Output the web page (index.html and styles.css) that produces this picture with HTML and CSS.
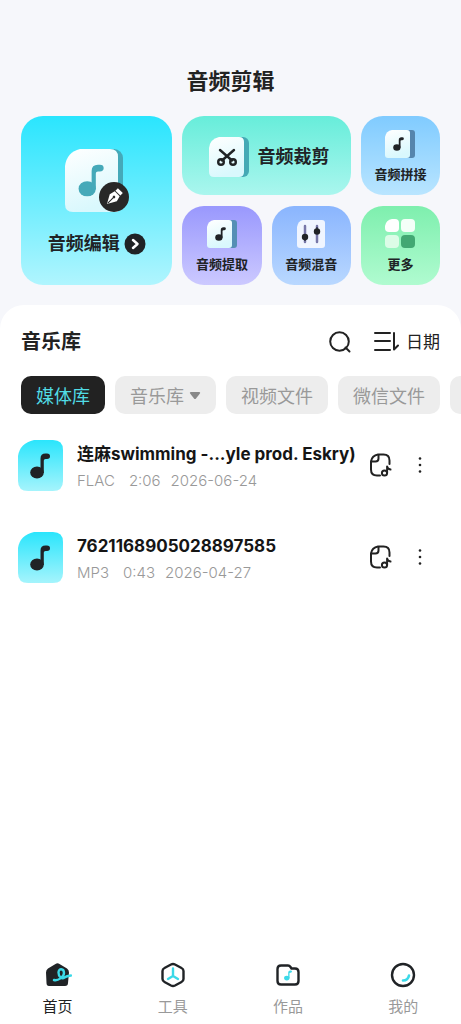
FILE: index.html
```html
<!DOCTYPE html>
<html lang="zh-CN">
<head>
<meta charset="utf-8">
<meta name="viewport" content="width=device-width, initial-scale=1">
<title>音频剪辑</title>
<link rel="stylesheet" href="styles.css">
</head>
<body>
<svg class="defs" width="0" height="0" aria-hidden="true">
  <defs>
    <linearGradient id="paper" x1="0" y1="0" x2="0.3" y2="1">
      <stop offset="0" stop-color="#fff"/><stop offset="1" stop-color="#d9f8fd"/>
    </linearGradient>
    <linearGradient id="cyan" x1="0" y1="0" x2="0" y2="1">
      <stop offset="0" stop-color="#2ae5fc"/><stop offset="1" stop-color="#a5f4fc"/>
    </linearGradient>
    <symbol id="note" viewBox="0 0 20 26">
      <ellipse cx="7" cy="19.500" rx="6.800" ry="6"/>
      <path d="M10.500 20V5.500Q10.500 0.500 15.500 0.500H17Q20 0.500 20 3.200T17 6H15.500Q13.800 6 13.800 7.500V20Z"/>
    </symbol>
    <symbol id="file-note" viewBox="0 0 24 26">
      <g fill="none" stroke="#222" stroke-width="2" stroke-linecap="round" stroke-linejoin="round">
        <path d="M11 23.500H8Q2 23.500 2 17.500V9.500Q3 3.500 9 2.500H14.500Q20.500 2.500 20.500 8.500V12"/>
        <path d="M2.500 9.500H6.500Q9.500 9.500 9.500 6.500V3"/>
        <circle cx="15.500" cy="21" r="2.600"/>
        <path d="M18.100 21V14.500Q18.500 17 21.500 17.500"/>
      </g>
    </symbol>
    <symbol id="dots" viewBox="0 0 4 18">
      <g fill="#222"><circle cx="2" cy="2.500" r="1.300"/><circle cx="2" cy="9" r="1.300"/><circle cx="2" cy="15.500" r="1.300"/></g>
    </symbol>
    <symbol id="track" viewBox="0 0 45 51">
      <path fill="url(#cyan)" d="M16 0H35Q45 0 45 10V41Q45 51 35 51H10Q0 51 0 41V16Q2 3 16 0Z"/>
      <use href="#note" x="12" y="13" width="20" height="26" fill="#202326"/>
    </symbol>
  </defs>
</svg>
<div class="app">
  <header class="header"><h1 class="title">音频剪辑</h1></header>

  <section class="tools" aria-label="音频工具">
    <button class="tool tool-edit">
      <svg width="66" height="66" viewBox="0 0 66 66" aria-hidden="true">
        <rect x="30" y="1" width="29" height="63" rx="9" fill="#45a9b9"/>
        <path fill="url(#paper)" d="M16 1H46Q54 1 54 9V64H9Q1 64 1 56V18Q3 4 16 1Z"/>
        <use href="#note" x="14" y="16" width="26" height="33" fill="#45a9b9"/>
        <circle cx="50" cy="49" r="15" fill="#282828"/>
        <g transform="translate(50 49) rotate(45)">
          <path fill="#fff" d="M-3.500 -9H3.500V-5.500H-3.500ZM-3.500 -4.500H3.500L5 1L0 10L-5 1Z"/>
          <path stroke="#282828" d="M0 1V9"/><circle r="1.300" fill="#282828"/>
        </g>
      </svg>
      <span class="tool-line">音频编辑
        <svg width="22" height="22" viewBox="0 0 22 22" aria-hidden="true"><circle cx="11" cy="11" r="10.500" fill="#202326"/><path d="M9 7L13.500 11L9 15" fill="none" stroke="#fff" stroke-width="2.500" stroke-linecap="round" stroke-linejoin="round"/></svg>
      </span>
    </button>
    <button class="tool tool-cut">
      <svg width="42" height="42" viewBox="0 0 42 42" aria-hidden="true">
        <rect x="20" y="1" width="21" height="40" rx="6" fill="#45a9b5"/>
        <path fill="url(#paper)" d="M11 1H31Q36 1 36 6V36Q36 41 31 41H6Q1 41 1 36V12Q2 3 11 1Z"/>
        <g fill="none" stroke="#202326" stroke-width="2.400" stroke-linecap="round"><path d="M12 14L24 24.500M26 14L14 24.500"/><circle cx="13" cy="26" r="2.800"/><circle cx="25" cy="26" r="2.800"/></g>
      </svg>
      <span>音频裁剪</span>
    </button>
    <button class="tool tool-small tool-join">
      <svg width="32" height="30" viewBox="0 0 32 30" aria-hidden="true">
        <rect x="14" y="1" width="17" height="28" rx="3" fill="#5585ad"/>
        <path fill="url(#paper)" d="M8 1H23Q26 1 26 4V26Q26 29 23 29H4Q1 29 1 26V8Q2 2 8 1Z"/>
        <use href="#note" x="9" y="8" width="11" height="14" fill="#202326"/>
      </svg>
      <span>音频拼接</span>
    </button>
    <button class="tool tool-small tool-extract">
      <svg width="32" height="30" viewBox="0 0 32 30" aria-hidden="true">
        <rect x="14" y="1" width="17" height="28" rx="3" fill="#558fb5"/>
        <path fill="url(#paper)" d="M8 1H23Q26 1 26 4V26Q26 29 23 29H4Q1 29 1 26V8Q2 2 8 1Z"/>
        <use href="#note" x="9" y="8" width="11" height="14" fill="#202326"/>
      </svg>
      <span>音频提取</span>
    </button>
    <button class="tool tool-small tool-mix">
      <svg width="32" height="30" viewBox="0 0 32 30" aria-hidden="true">
        <path fill="#f0f5ff" d="M8 1H27Q30 1 30 4V26Q30 29 27 29H5Q2 29 2 26V8Q3 2 8 1Z"/>
        <path d="M10 7V23M22 7V23" stroke="#7777a8" stroke-width="2.500" stroke-linecap="round"/>
        <path d="M10 17V22M22 8V13" stroke="#303449" stroke-width="1.500"/>
        <circle cx="10" cy="18" r="3.200" fill="#202326"/><circle cx="22" cy="12.500" r="3.200" fill="#202326"/>
      </svg>
      <span>音频混音</span>
    </button>
    <button class="tool tool-small tool-more">
      <svg width="32" height="30" viewBox="0 0 32 30" aria-hidden="true">
        <path fill="#fff" d="M8 0H11Q15 0 15 4V9Q15 13 11 13H5Q1 13 1 9V7Q2 1 8 0Z"/>
        <rect x="17" y="0" width="14" height="13" rx="4" fill="#f4fff8"/>
        <rect x="1" y="16" width="14" height="13" rx="4" fill="#dcfce7"/>
        <rect x="17" y="16" width="14" height="13" rx="4" fill="#42a873"/>
      </svg>
      <span>更多</span>
    </button>
  </section>

  <main class="library">
    <div class="library-head">
      <h2 class="library-title">音乐库</h2>
      <button class="plain" aria-label="搜索">
        <svg width="24" height="24" viewBox="0 0 24 24" fill="none" stroke="#222" stroke-width="2" aria-hidden="true"><circle cx="11.500" cy="11.500" r="9.300"/><path d="M17.500 17.500L21.500 21.500" stroke-linecap="round"/></svg>
      </button>
      <button class="plain sort">
        <svg width="26" height="22" viewBox="0 0 26 22" fill="none" stroke="#222" stroke-width="2" stroke-linecap="round" stroke-linejoin="round" aria-hidden="true"><path d="M1 2H16M1 10H16M1 19H16M20 2V18.500L24 14.500"/></svg>
        <span>日期</span>
      </button>
    </div>

    <div class="tabs">
      <button class="tab tab-active">媒体库</button>
      <button class="tab">音乐库<svg width="12" height="9" viewBox="0 0 12 9" aria-hidden="true"><path d="M2 1H10Q12 1 10.500 3L7 7.500Q6 8.500 5 7.500L1.500 3Q0 1 2 1Z" fill="#888"/></svg></button>
      <button class="tab">视频文件</button>
      <button class="tab">微信文件</button>
      <button class="tab" aria-label="更多文件"></button>
    </div>

    <ul class="list">
      <li class="item">
        <svg class="cover" width="45" height="51" aria-hidden="true"><use href="#track"/></svg>
        <div class="info">
          <div class="name">连麻swimming -...yle prod. Eskry)</div>
          <div class="meta"><span class="format">FLAC</span><span>2:06</span><span>2026-06-24</span></div>
        </div>
        <button class="plain" aria-label="编辑音频"><svg width="24" height="26" aria-hidden="true"><use href="#file-note"/></svg></button>
        <button class="plain more" aria-label="更多操作"><svg width="4" height="18" aria-hidden="true"><use href="#dots"/></svg></button>
      </li>
      <li class="item">
        <svg class="cover" width="45" height="51" aria-hidden="true"><use href="#track"/></svg>
        <div class="info">
          <div class="name">7621168905028897585</div>
          <div class="meta"><span class="format">MP3</span><span>0:43</span><span>2026-04-27</span></div>
        </div>
        <button class="plain" aria-label="编辑音频"><svg width="24" height="26" aria-hidden="true"><use href="#file-note"/></svg></button>
        <button class="plain more" aria-label="更多操作"><svg width="4" height="18" aria-hidden="true"><use href="#dots"/></svg></button>
      </li>
    </ul>
  </main>

  <nav class="nav">
    <a class="nav-item nav-current" href="#home" aria-current="page">
      <svg width="28" height="26" viewBox="0 0 28 26" aria-hidden="true"><path d="M11.500 2Q13.500 0.500 15.500 2L23 6.500Q25 8 25 10.500L24 21Q24 24 21 24H5Q2.500 24 2.500 21L2 10.500Q2 8 4 6.500Z" fill="#202326"/><path d="M10 18C14 19 20 15 20 11C20 6 14.500 6 14.500 10.500C14.500 15 18 17.500 20.500 15.500Q22.500 14 27 13.500" fill="none" stroke="#3bd9e8" stroke-width="2.400" stroke-linecap="round"/></svg>
      <span>首页</span>
    </a>
    <a class="nav-item" href="#tools">
      <svg width="26" height="26" viewBox="0 0 26 26" fill="none" aria-hidden="true"><path d="M11 2.500Q13 1.500 15 2.500L21.500 6Q23.500 7 23.500 9V17Q23.500 19 21.500 20L15 23.500Q13 24.500 11 23.500L4.500 20Q2.500 19 2.500 17V9Q2.500 7 4.500 6Z" stroke="#202326" stroke-width="2.400"/><path d="M13 6.500V14M13 14L8 17M13 14L18 17" stroke="#3bd9e8" stroke-width="2.400" stroke-linecap="round"/></svg>
      <span>工具</span>
    </a>
    <a class="nav-item" href="#works">
      <svg width="26" height="26" viewBox="0 0 26 26" aria-hidden="true"><path d="M6 3.500H13Q14.500 3.500 15.500 5L16.500 6.500H20Q23.500 6.500 23.500 10V19Q23.500 22.500 20 22.500H6Q2.500 22.500 2.500 19V7Q2.500 3.500 6 3.500Z" fill="none" stroke="#202326" stroke-width="2.400"/><use href="#note" x="9" y="8" width="8" height="11" fill="#3bd9e8"/></svg>
      <span>作品</span>
    </a>
    <a class="nav-item" href="#mine">
      <svg width="26" height="26" viewBox="0 0 26 26" fill="none" aria-hidden="true"><circle cx="13" cy="13" r="11" stroke="#202326" stroke-width="2.400"/><path d="M13 18.500Q18 18.500 19 13.500" stroke="#3bd9e8" stroke-width="2.600" stroke-linecap="round"/></svg>
      <span>我的</span>
    </a>
  </nav>
</div>
</body>
</html>
```

FILE: styles.css
```css
* { box-sizing: border-box; }

body {
  margin: 0;
  background: #f6f7fb;
  color: #222;
  font-family: Inter, "Noto Sans CJK SC", sans-serif;
}

button {
  border: 0;
  margin: 0;
  padding: 0;
  background: none;
  color: inherit;
  font: inherit;
  cursor: pointer;
}

svg { display: block; flex: none; }

.defs { position: absolute; }

.app {
  display: flex;
  flex-direction: column;
  min-height: 100vh;
  overflow: hidden;
}

.header { padding: 65px 20px 19px; }

.title {
  margin: 0;
  font-size: 22px;
  line-height: 32px;
  font-weight: 700;
  text-align: center;
}

.tools {
  display: grid;
  grid-template-columns: 151fr 79fr 79fr 79fr;
  grid-auto-rows: 79px;
  gap: 11px 10px;
  padding: 0 21px;
}

.tool {
  display: flex;
  align-items: center;
  justify-content: center;
  border-radius: 22px;
  color: #202326;
  font-weight: 700;
  font-size: 18px;
  line-height: 24px;
}

.tool-edit {
  grid-row: span 2;
  flex-direction: column;
  gap: 18px;
  padding-top: 2px;
  background: linear-gradient(#2ae5fe, #b0f5fe);
}

.tool-line { display: flex; align-items: center; gap: 4px; }

.tool-cut {
  grid-column: span 2;
  gap: 8px;
  padding: 2px 0 0 4px;
  background: linear-gradient(#67edda, #aaf6ee);
}

.tool-small {
  flex-direction: column;
  gap: 6px;
  font-size: 13px;
  line-height: 18px;
}

.tool-join { background: linear-gradient(#80cbff, #b9e5ff); }
.tool-extract { background: linear-gradient(#9998fd, #ccc9ff); }
.tool-mix { background: linear-gradient(#8ab5fe, #b9d8ff); }
.tool-more { background: linear-gradient(#7eefae, #b0fbd0); }

.library {
  flex: 1;
  margin-top: 20px;
  padding-top: 21px;
  border-radius: 24px 24px 0 0;
  background: #fff;
}

.library-head {
  display: flex;
  align-items: center;
  gap: 22px;
  padding: 0 21px;
}

.library-title {
  flex: 1;
  margin: 0;
  font-size: 20px;
  line-height: 32px;
  font-weight: 700;
}

.sort {
  display: flex;
  align-items: center;
  gap: 6px;
  font-size: 17px;
  line-height: 24px;
}

.tabs {
  display: flex;
  gap: 10px;
  margin-top: 18px;
  padding-left: 21px;
  overflow: hidden;
}

.tab {
  display: flex;
  flex: none;
  align-items: center;
  gap: 5px;
  min-width: 60px;
  height: 38px;
  padding: 0 15px;
  border-radius: 10px;
  background: #ededed;
  color: #999;
  font-size: 18px;
  white-space: nowrap;
}

.tab-active { background: #222; color: #51dce5; }

.list { margin: 0; padding: 20px 39px 0 18px; list-style: none; }

.item {
  display: flex;
  align-items: center;
  height: 62px;
  margin-bottom: 30px;
}

.info { flex: 1; min-width: 0; padding: 4px 0 0 14px; }

.name {
  color: #151515;
  font-size: 17px;
  line-height: 28px;
  font-weight: 700;
  white-space: nowrap;
}

.meta {
  display: flex;
  gap: 10px;
  color: #999;
  font-size: 15px;
  line-height: 26px;
  font-weight: 300;
}

.format { padding-right: 4px; }

.more { margin-left: 25px; }

.nav {
  display: grid;
  grid-template-columns: repeat(4, 1fr);
  padding-bottom: 6px;
  background: #fff;
}

.nav-item {
  display: flex;
  flex-direction: column;
  align-items: center;
  gap: 8px;
  color: #999;
  font-size: 15px;
  line-height: 22px;
  text-decoration: none;
}

.nav-current { color: #222; }
```
